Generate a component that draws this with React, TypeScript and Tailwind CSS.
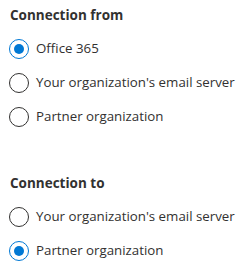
import React from 'react';

const Radio = ({ label, checked }: { label: string; checked?: boolean }) => (
  <label className="flex items-center h-[34px] gap-[7px]">
    <span
      className={`flex shrink-0 items-center justify-center w-[20px] h-[20px] rounded-full border ${
        checked ? 'border-[#0078d4]' : 'border-[#323130]'
      }`}
    >
      {checked && <span className="w-[10px] h-[10px] rounded-full bg-[#0078d4]" />}
    </span>
    <span className="text-[13.3px] text-[#323130] whitespace-nowrap">{label}</span>
  </label>
);

const Section = ({ title, children }: { title: string; children: React.ReactNode }) => (
  <div>
    <h3 className="pl-[1px] pt-[5px] pb-[7px] leading-[20px] text-[13.5px] font-bold text-[#323130]">{title}</h3>
    <div className="flex flex-col">{children}</div>
  </div>
);

export default function App() {
  return (
    <div className="w-[238px] h-[271px] bg-white pl-[9px] pt-0 font-['Open_Sans',sans-serif]">
      <div className="flex flex-col gap-[34px]">
        <Section title="Connection from">
          <Radio label="Office 365" checked />
          <Radio label="Your organization's email server" />
          <Radio label="Partner organization" />
        </Section>
        <Section title="Connection to">
          <Radio label="Your organization's email server" />
          <Radio label="Partner organization" checked />
        </Section>
      </div>
    </div>
  );
}
